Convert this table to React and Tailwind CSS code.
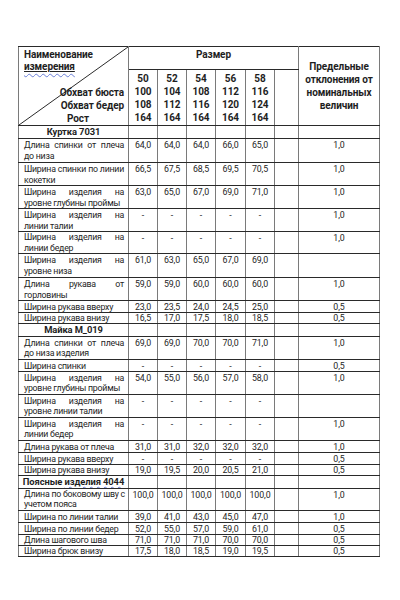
import React from "react";

const sections = [
  {
    title: "Куртка 7031",
    th: 13,
    rows: [
      { l: ["Длина спинки от плеча", "до низа"], v: ["64,0", "64,0", "64,0", "66,0", "65,0"], t: "1,0", h: 24 },
      { l: ["Ширина спинки по линии", "кокетки"], v: ["66,5", "67,5", "68,5", "69,5", "70,5"], t: "1,0", h: 23 },
      { l: ["Ширина изделия на", "уровне глубины проймы"], v: ["63,0", "65,0", "67,0", "69,0", "71,0"], t: "1,0", h: 23 },
      { l: ["Ширина изделия на", "линии талии"], v: ["-", "-", "-", "-", "-"], t: "1,0", h: 23 },
      { l: ["Ширина изделия на", "линии бедер"], v: ["-", "-", "-", "-", "-"], t: "1,0", h: 22 },
      { l: ["Ширина изделия на", "уровне низа"], v: ["61,0", "63,0", "65,0", "67,0", "69,0"], t: "", h: 24 },
      { l: ["Длина рукава от", "горловины"], v: ["59,0", "59,0", "60,0", "60,0", "60,0"], t: "1,0", h: 23 },
      { l: ["Ширина рукава вверху"], v: ["23,0", "23,5", "24,0", "24,5", "25,0"], t: "0,5", h: 12 },
      { l: ["Ширина рукава внизу"], v: ["16,5", "17,0", "17,5", "18,0", "18,5"], t: "0,5", h: 11 },
    ],
  },
  {
    title: "Майка M_019",
    th: 12,
    rows: [
      { l: ["Длина спинки от плеча", "до низа изделия"], v: ["69,0", "69,0", "70,0", "70,0", "71,0"], t: "1,0", h: 23 },
      { l: ["Ширина спинки"], v: ["-", "-", "-", "-", "-"], t: "0,5", h: 12 },
      { l: ["Ширина изделия на", "уровне глубины проймы"], v: ["54,0", "55,0", "56,0", "57,0", "58,0"], t: "1,0", h: 23 },
      { l: ["Ширина изделия на", "уровне линии талии"], v: ["-", "-", "-", "-", "-"], t: "", h: 23 },
      { l: ["Ширина изделия на", "линии бедер"], v: ["-", "-", "-", "-", "-"], t: "1,0", h: 23 },
      { l: ["Длина рукава от плеча"], v: ["31,0", "31,0", "32,0", "32,0", "32,0"], t: "1,0", h: 12 },
      { l: ["Ширина рукава вверху"], v: ["-", "-", "-", "-", "-"], t: "0,5", h: 12 },
      { l: ["Ширина рукава внизу"], v: ["19,0", "19,5", "20,0", "20,5", "21,0"], t: "0,5", h: 11 },
    ],
  },
  {
    title: "Поясные изделия 4044",
    th: 13,
    rows: [
      { l: ["Длина по боковому шву с", "учетом пояса"], v: ["100,0", "100,0", "100,0", "100,0", "100,0"], t: "1,0", h: 22 },
      { l: ["Ширина по линии талии"], v: ["39,0", "41,0", "43,0", "45,0", "47,0"], t: "1,0", h: 12 },
      { l: ["Ширина по линии бедер"], v: ["52,0", "55,0", "57,0", "59,0", "61,0"], t: "0,5", h: 12 },
      { l: ["Длина шагового шва"], v: ["71,0", "71,0", "71,0", "70,0", "70,0"], t: "0,5", h: 11 },
      { l: ["Ширина брюк внизу"], v: ["17,5", "18,0", "18,5", "19,0", "19,5"], t: "0,5", h: 11 },
    ],
  },
];

const sizes = [
  ["50", "100", "108", "164"],
  ["52", "104", "112", "164"],
  ["54", "108", "116", "164"],
  ["56", "112", "120", "164"],
  ["58", "116", "124", "164"],
  ["", "", "", ""],
];

const cell = "border border-x-[#7a7a7a] border-y-[#2a2a2a] p-0 align-top overflow-hidden";

function Label({ lines, tight }) {
  const multi = lines.length > 1;
  return (
    <div
      className={
        "pl-[5px] pr-[4px] whitespace-nowrap tracking-[-0.25px] " +
        (multi ? "leading-[10.5px] " : "leading-[10px] ") +
        (tight ? "pt-0" : "pt-[1px]")
      }
    >
      {lines.map((ln, i) => (
        <div
          key={i}
          className={i < lines.length - 1 ? "text-justify [text-align-last:justify]" : "text-left"}
        >
          {ln}
        </div>
      ))}
    </div>
  );
}

function SectionTitle({ title }) {
  if (title === "Поясные изделия 4044") {
    return (
      <span>
        Поясные{" "}
        <span className="underline decoration-wavy decoration-[#6b7fd6] decoration-[0.5px] underline-offset-[1px]">
          изделия 4044
        </span>
      </span>
    );
  }
  return title;
}

export default function App() {
  return (
    <div
      className="w-[400px] h-[600px] bg-white overflow-hidden pt-[46px] pl-[18px] text-[#1e1e1e]"
      style={{ fontFamily: 'Roboto, "Noto Sans", sans-serif' }}
    >
      <table className="table-fixed border-collapse w-[361px] text-[8.8px] tracking-[-0.1px]">
        <colgroup>
          <col className="w-[110px]" />
          <col className="w-[29px]" />
          <col className="w-[29px]" />
          <col className="w-[29px]" />
          <col className="w-[30px]" />
          <col className="w-[29px]" />
          <col className="w-[24px]" />
          <col className="w-[81px]" />
        </colgroup>
        <tbody>
          <tr className="h-[23px]">
            <td rowSpan={2} className={cell + " relative font-bold text-[10px]"}>
              <svg
                className="absolute inset-0 w-full h-full"
                viewBox="0 0 100 100"
                preserveAspectRatio="none"
              >
                <line x1="0" y1="100" x2="100" y2="0" stroke="#2a2a2a" strokeWidth="1" vectorEffect="non-scaling-stroke" />
              </svg>
              <div className="relative flex flex-col justify-between h-[78px] pl-[5px] pr-[4px] pt-[2px] leading-[12px] whitespace-nowrap">
                <div>
                  <div>Наименование</div>
                  <div>
                    <span className="underline decoration-[#222] underline-offset-[1px]">
                      <span className="underline decoration-wavy decoration-[#6b7fd6] decoration-[0.5px] underline-offset-[3px]">
                        измерения
                      </span>
                    </span>
                  </div>
                </div>
                <div className="text-right leading-[13px]">
                  <div>Обхват бюста</div>
                  <div>Обхват бедер</div>
                  <div className="pr-[35px]">Рост</div>
                </div>
              </div>
            </td>
            <td colSpan={6} className={cell + " text-center font-bold text-[10px] leading-[13px] pt-[1px]"}>
              Размер
            </td>
            <td
              rowSpan={2}
              className={cell + " !align-middle text-center font-bold text-[10px] leading-[13px] whitespace-nowrap"}
            >
              Предельные
              <br />
              отклонения от
              <br />
              номинальных
              <br />
              величин
            </td>
          </tr>
          <tr className="h-[56px]">
            {sizes.map((s, i) => (
              <td key={i} className={cell + " !align-middle text-center font-bold text-[10px] leading-[13px]"}>
                {s.map((x, j) => (
                  <div key={j} className="h-[13px]">{x}</div>
                ))}
              </td>
            ))}
          </tr>
          {sections.map((sec) => (
            <React.Fragment key={sec.title}>
              <tr style={{ height: sec.th }}>
                <td className={cell + " text-center font-bold text-[9.4px] leading-[10.5px] pt-[1px] whitespace-nowrap"}>
                  <SectionTitle title={sec.title} />
                </td>
                {[0, 1, 2, 3, 4, 5, 6].map((k) => (
                  <td key={k} className={cell}></td>
                ))}
              </tr>
              {sec.rows.map((r, idx) => {
                const tight = r.h === 11 || r.h === 22;
                const vcls =
                  cell + " text-center leading-[10px] whitespace-nowrap " + (r.h === 11 ? "pt-0" : "pt-[1px]");
                return (
                  <tr key={idx} style={{ height: r.h }}>
                    <td className={cell}>
                      <Label lines={r.l} tight={tight} />
                    </td>
                    {r.v.map((x, k) => (
                      <td key={k} className={vcls}>
                        {x}
                      </td>
                    ))}
                    <td className={cell}></td>
                    <td className={vcls}>{r.t}</td>
                  </tr>
                );
              })}
            </React.Fragment>
          ))}
        </tbody>
      </table>
    </div>
  );
}
